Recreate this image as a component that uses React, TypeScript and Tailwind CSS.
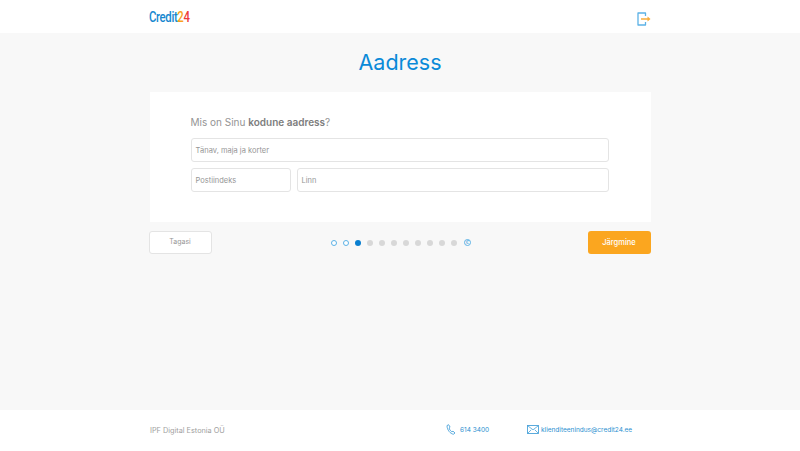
import React from 'react';

const font = { fontFamily: 'Inter, "Noto Sans", sans-serif' };

const LogoutIcon = () => (
  <svg width="14" height="14" viewBox="0 0 14 14" fill="none">
    <path d="M8.5 4V1H1v12h7.5v-3" stroke="#5cb2e6" strokeWidth="1.3" strokeLinejoin="round" />
    <path d="M4 7h7" stroke="#f9ad3a" strokeWidth="1.500" />
    <path d="M10.5 4.5 13.500 7l-3 2.500z" fill="#f9ad3a" />
  </svg>
);

const PhoneIcon = () => (
  <svg width="10" height="11" viewBox="0 0 10 11" fill="none" className="-mt-[3px]">
    <path
      d="M1 1.6 2.6.7l1.5 2.4-1 .9c.4 1.500 1.300 2.900 2.700 3.800l1.200-.6L9 9l-1.500 1.200C4.500 10 1 6 1 1.600z"
      stroke="#4aa3da"
      strokeWidth="0.9"
      strokeLinejoin="round"
    />
  </svg>
);

const MailIcon = () => (
  <svg width="12" height="9" viewBox="0 0 12 9" fill="none" className="-mt-[3px]">
    <rect x="0.500" y="0.500" width="11" height="8" stroke="#4aa3da" strokeWidth="0.9" />
    <path d="M1 1l5 3.800L11 1M1 8l3.200-3.200M11 8 7.800 4.800" stroke="#4aa3da" strokeWidth="0.8" />
  </svg>
);

const Field = ({ placeholder, className }: { placeholder: string; className: string }) => (
  <div className={`h-[24px] bg-white border border-[#e4e4e4] rounded-[3px] pl-[4px] pt-[1px] flex items-center text-[7.5px] text-[#969696] ${className}`}>
    {placeholder}
  </div>
);

const Steps = () => (
  <div className="flex items-center gap-[6px]">
    <span className="w-[6px] h-[6px] rounded-full border border-[#5cb2e6] bg-white" />
    <span className="w-[6px] h-[6px] rounded-full border border-[#5cb2e6] bg-white" />
    <span className="w-[6px] h-[6px] rounded-full bg-[#0a7fd0]" />
    {[0, 1, 2, 3, 4, 5, 6, 7].map((i) => (
      <span key={i} className="w-[6px] h-[6px] rounded-full bg-[#d8d8d8]" />
    ))}
    <span className="w-[7px] h-[7px] ml-[1px] rounded-full border border-[#5cb2e6] text-[5px] leading-none text-[#3fa3e0] flex items-center justify-center">
      €
    </span>
  </div>
);

export default function App() {
  return (
    <div style={font} className="w-[800px] h-[451px] flex flex-col bg-[#f8f8f8] overflow-hidden">
      <header className="h-[33px] shrink-0 bg-white">
        <div className="w-[501px] ml-[150px] h-full flex items-center justify-between">
          <div
            className="text-[15px] font-medium tracking-[-0.5px] scale-x-[0.76] origin-left -ml-[1px] pt-[1px]"
            style={{ fontFamily: 'Roboto, sans-serif' }}
          >
            <span className="text-[#1687cf]">Credit</span>
            <span className="text-[#f9a11b]">2</span>
            <span className="text-[#ee3b3b]">4</span>
          </div>
          <div className="mt-[4px] flex">
            <LogoutIcon />
          </div>
        </div>
      </header>

      <main className="flex-1 flex flex-col items-center">
        <h1 className="text-[21.500px] leading-[28px] mt-[15px] text-[#0a8ad8]">Aadress</h1>

        <section className="w-[501px] h-[130px] mt-[16px] bg-white pl-[41px] pr-[42px] pt-[24px]">
          <p className="text-[10px] leading-[12px] text-[#949494]">
            Mis on Sinu <b className="font-semibold text-[#7d7d7d]">kodune aadress</b>?
          </p>
          <div className="mt-[10px] flex flex-col gap-[6px]">
            <Field placeholder="Tänav, maja ja korter" className="w-full" />
            <div className="flex gap-[6px]">
              <Field placeholder="Postiindeks" className="w-[100px]" />
              <Field placeholder="Linn" className="flex-1" />
            </div>
          </div>
        </section>

        <div className="w-[501px] mt-[9px] h-[23px] flex items-center justify-between">
          <button className="w-[63px] h-[23px] -ml-[1px] bg-white border border-[#e4e4e4] rounded-[3px] text-[7px] text-[#969696]">
            Tagasi
          </button>
          <div className="ml-[3px]">
            <Steps />
          </div>
          <button className="w-[63px] h-[23px] bg-[#fba61f] rounded-[3px] text-[7.500px] font-medium text-white">
            Järgmine
          </button>
        </div>
      </main>

      <footer className="h-[41px] shrink-0 bg-white">
        <div className="w-[501px] ml-[150px] h-full flex items-center pt-[1px]">
          <span className="text-[#a0a0a0] text-[7.300px] w-[296px]">IPF Digital Estonia OÜ</span>
          <span className="flex items-center gap-[4px] text-[#2b8fd0] text-[6.500px] w-[81px]">
            <PhoneIcon />
            614 3400
          </span>
          <span className="flex items-center gap-[2px] text-[#2b8fd0] text-[6.500px] whitespace-nowrap">
            <MailIcon />
            klienditeenindus@credit24.ee
          </span>
        </div>
      </footer>
    </div>
  );
}
